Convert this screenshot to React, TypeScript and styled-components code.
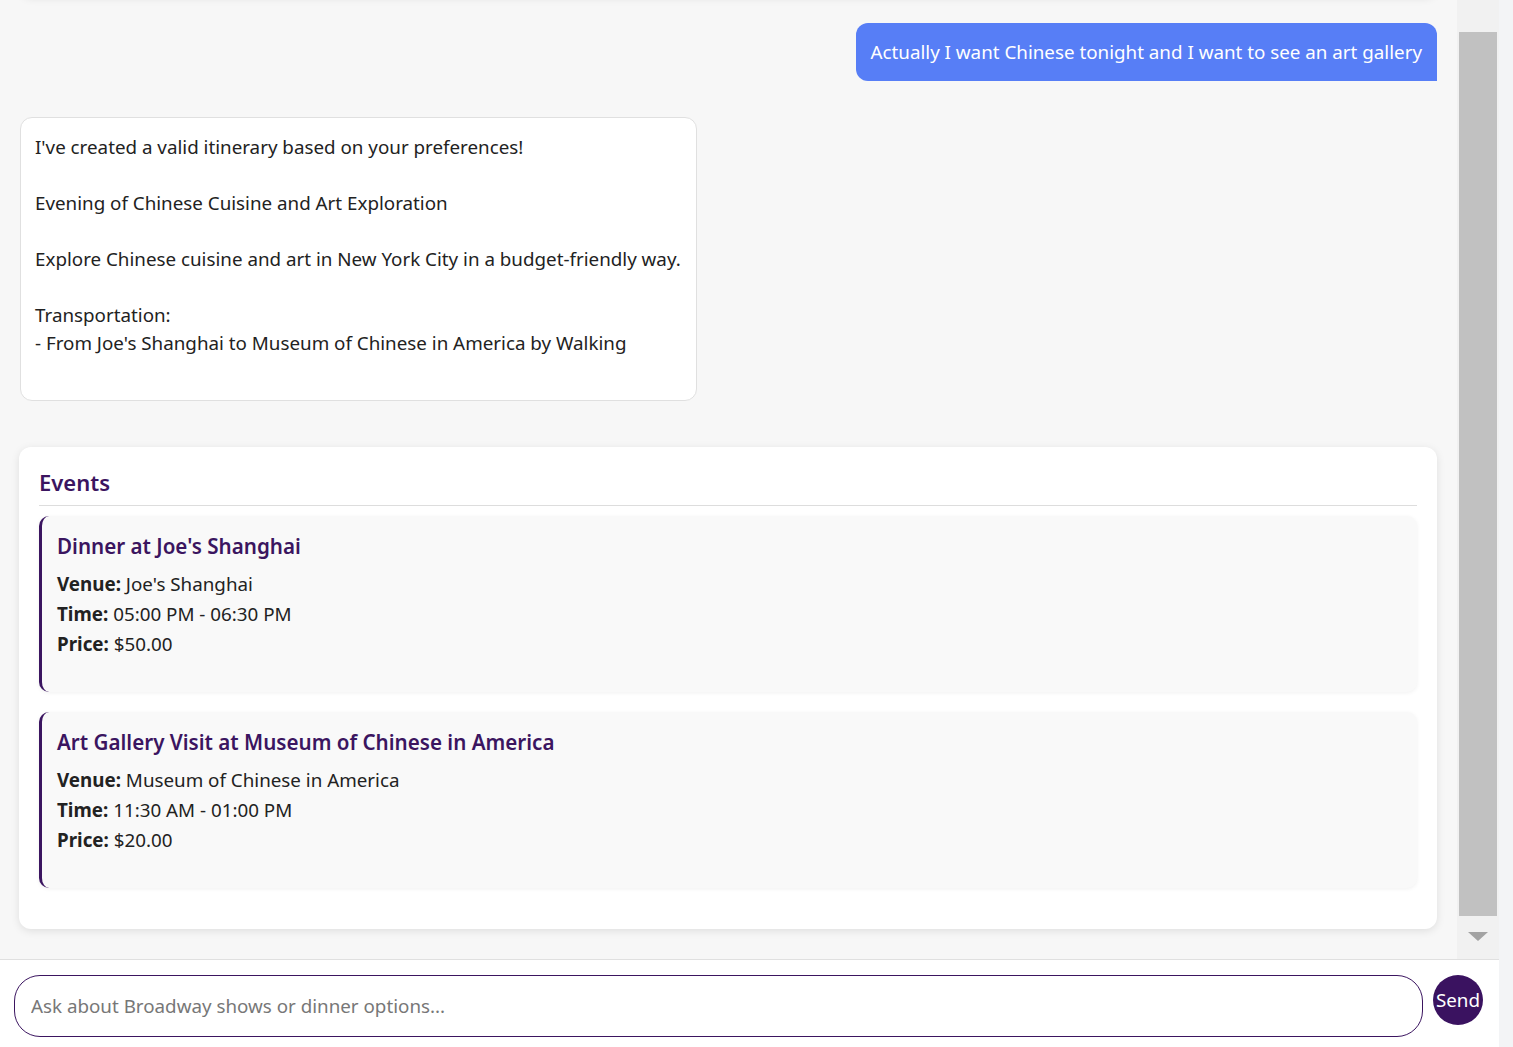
import React from "react";
import styled, { createGlobalStyle } from "styled-components";

const Global = createGlobalStyle`
  html, body { margin: 0; padding: 0; height: 100%; }
  body { background: #f3f4f6; font-family: "Noto Sans", "Open Sans", sans-serif; color: #222; }
  #root { height: 100%; }
  * { box-sizing: border-box; }
`;

const Shell = styled.div`
  width: calc(100% - 14px);
  height: 100vh;
  display: flex;
  flex-direction: column;
  background: #fff;
`;

const ChatRow = styled.div`
  flex: 1;
  min-height: 0;
  display: flex;
  background: #f7f7f7;
`;

const Messages = styled.div`
  flex: 1;
  min-width: 0;
  overflow: hidden;
  display: flex;
  flex-direction: column;
  justify-content: flex-end;
  padding: 0 20px 30px 19px;
`;

const ScrollTrack = styled.div`
  width: 42px;
  background: #f1f1f1;
  display: flex;
  flex-direction: column;
  align-items: center;
  padding-top: 32px;
`;

const ScrollThumb = styled.div`
  width: 38px;
  height: 884px;
  background: #c1c1c1;
`;

const ScrollArrow = styled.div`
  margin-top: 16px;
  width: 0;
  height: 0;
  border-left: 10px solid transparent;
  border-right: 10px solid transparent;
  border-top: 9px solid #a3a3a3;
`;

const EarlierCard = styled.div`
  flex-shrink: 0;
  height: 240px;
  margin-left: 1px;
  background: #fff;
  border-radius: 12px;
  box-shadow: 0 2px 8px rgba(0, 0, 0, 0.1);
`;

const UserBubble = styled.div`
  align-self: flex-end;
  background: #577ef6;
  color: #fff;
  font-size: 18.8px;
  line-height: 28px;
  padding: 15px 15px;
  border-radius: 12px 12px 0 12px;
  margin-top: 27px;
  flex-shrink: 0;
`;

const BotBubble = styled.div`
  align-self: flex-start;
  margin-left: 1px;
  background: #fff;
  border: 1px solid #e0e0e0;
  border-radius: 12px;
  padding: 15px 15px 43px 14px;
  font-size: 18.8px;
  line-height: 28px;
  white-space: pre-wrap;
  color: #222;
  margin-top: 36px;
  flex-shrink: 0;
`;

const EventsCard = styled.section`
  flex-shrink: 0;
  background: #fff;
  border-radius: 12px;
  box-shadow: 0 2px 8px rgba(0, 0, 0, 0.1);
  padding: 20px 20px 21px 20px;
  margin-top: 46px;
`;

const EventsTitle = styled.h2`
  margin: 0;
  font-size: 22px;
  font-weight: 600;
  line-height: 30px;
  color: #3b1560;
  padding-bottom: 8px;
  border-bottom: 1px solid #dddddd;
  margin-bottom: 10px;
`;

const EventItem = styled.div`
  background: #f9f9f9;
  border-left: 3px solid #3b1560;
  border-radius: 10px;
  box-shadow: 0 1px 4px rgba(0, 0, 0, 0.06);
  padding: 15px 15px 17px 15px;
  margin-bottom: 20px;
`;

const EventName = styled.h3`
  margin: 0 0 8px 0;
  font-size: 20.6px;
  font-weight: 600;
  line-height: 30px;
  color: #3b1560;
`;

const Detail = styled.p`
  margin: 0;
  font-size: 18.8px;
  line-height: 30px;
  color: #222;
  &:last-child { margin-bottom: 16px; }
  strong { font-weight: 700; }
`;

const InputBar = styled.form`
  flex-shrink: 0;
  display: flex;
  align-items: flex-start;
  gap: 10px;
  padding: 15px 16px 10px 14px;
  border-top: 1px solid #e0e0e0;
  background: #fff;
  height: 88px;
`;

const TextInput = styled.input`
  flex: 1;
  height: 62px;
  border: 1px solid #3b1560;
  border-radius: 26px;
  padding: 0 16px;
  font-family: "Noto Sans", "Open Sans", sans-serif;
  font-size: 18.8px;
  color: #222;
  outline: none;
  &::placeholder { color: #777; }
`;

const SendButton = styled.button`
  width: 50px;
  height: 50px;
  border-radius: 50%;
  border: none;
  background: #3a1260;
  color: #fff;
  font-family: "Noto Sans", "Open Sans", sans-serif;
  font-size: 18.8px;
  padding: 0;
  display: flex;
  align-items: center;
  justify-content: center;
  overflow: visible;
  white-space: nowrap;
`;

type Ev = { name: string; venue: string; time: string; price: string };

const events: Ev[] = [
  { name: "Dinner at Joe's Shanghai", venue: "Joe's Shanghai", time: "05:00 PM - 06:30 PM", price: "$50.00" },
  { name: "Art Gallery Visit at Museum of Chinese in America", venue: "Museum of Chinese in America", time: "11:30 AM - 01:00 PM", price: "$20.00" },
];

function EventList({ items }: { items: Ev[] }) {
  return (
    <EventsCard>
      <EventsTitle>Events</EventsTitle>
      {items.map((e) => (
        <EventItem key={e.name}>
          <EventName>{e.name}</EventName>
          <Detail><strong>Venue:</strong> {e.venue}</Detail>
          <Detail><strong>Time:</strong> {e.time}</Detail>
          <Detail><strong>Price:</strong> {e.price}</Detail>
        </EventItem>
      ))}
    </EventsCard>
  );
}

const botText = `I've created a valid itinerary based on your preferences!

Evening of Chinese Cuisine and Art Exploration

Explore Chinese cuisine and art in New York City in a budget-friendly way.

Transportation:
- From Joe's Shanghai to Museum of Chinese in America by Walking`;

export default function App() {
  return (
    <>
      <Global />
      <Shell>
        <ChatRow>
          <Messages>
            <EarlierCard />
            <UserBubble>Actually I want Chinese tonight and I want to see an art gallery</UserBubble>
            <BotBubble>{botText}</BotBubble>
            <EventList items={events} />
          </Messages>
          <ScrollTrack>
            <ScrollThumb />
            <ScrollArrow />
          </ScrollTrack>
        </ChatRow>
        <InputBar onSubmit={(e) => e.preventDefault()}>
          <TextInput placeholder="Ask about Broadway shows or dinner options..." />
          <SendButton type="submit">Send</SendButton>
        </InputBar>
      </Shell>
    </>
  );
}
